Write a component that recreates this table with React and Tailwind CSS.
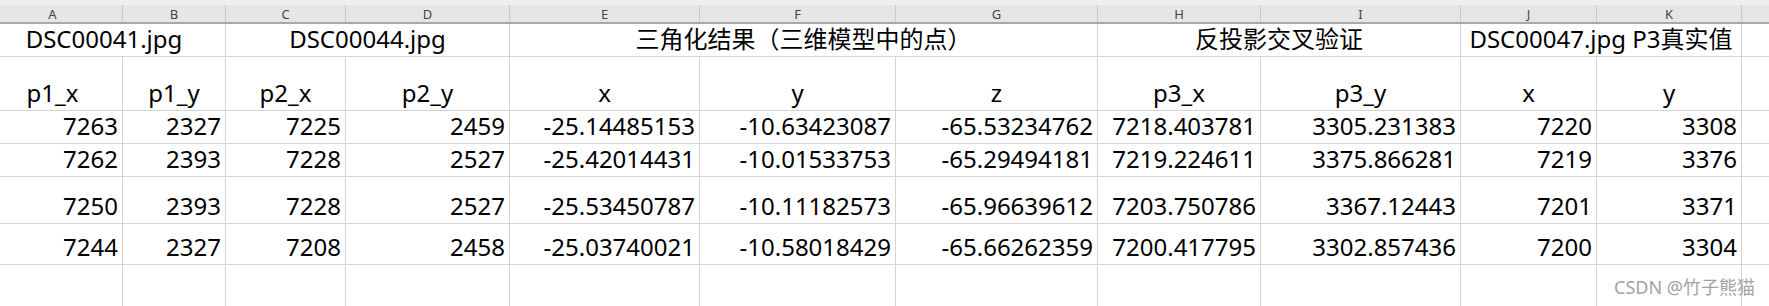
import React from 'react';

const COLS = 'grid grid-cols-[140px_103px_120px_164px_190px_196px_202px_163px_200px_136px_145px_60px]';
const FONT = { fontFamily: '"Noto Sans", "Noto Sans CJK SC", sans-serif' };

const letters = ['A', 'B', 'C', 'D', 'E', 'F', 'G', 'H', 'I', 'J', 'K', ''];

const titles = [
  { span: 'col-span-2', text: 'DSC00041.jpg' },
  { span: 'col-span-2', text: 'DSC00044.jpg' },
  { span: 'col-span-3', text: '三角化结果（三维模型中的点）' },
  { span: 'col-span-2', text: '反投影交叉验证' },
  { span: 'col-span-2', text: 'DSC00047.jpg P3真实值' },
];

const heads = ['p1_x', 'p1_y', 'p2_x', 'p2_y', 'x', 'y', 'z', 'p3_x', 'p3_y', 'x', 'y'];

const rows = [
  { h: 'h-[33px]', cells: ['7263', '2327', '7225', '2459', '-25.14485153', '-10.63423087', '-65.53234762', '7218.403781', '3305.231383', '7220', '3308'] },
  { h: 'h-[33px]', cells: ['7262', '2393', '7228', '2527', '-25.42014431', '-10.01533753', '-65.29494181', '7219.224611', '3375.866281', '7219', '3376'] },
  { h: 'h-[47px]', cells: ['7250', '2393', '7228', '2527', '-25.53450787', '-10.11182573', '-65.96639612', '7203.750786', '3367.12443', '7201', '3371'] },
  { h: 'h-[41px]', cells: ['7244', '2327', '7208', '2458', '-25.03740021', '-10.58018429', '-65.66262359', '7200.417795', '3302.857436', '7200', '3304'] },
];

const cell = 'border-r border-b border-[#d4d4d4] flex items-end pb-[5px] leading-[24px] text-[24px] text-black whitespace-nowrap overflow-visible';

export default function App() {
  return (
    <div className="relative h-[306px] w-full overflow-hidden bg-white" style={FONT}>
      <div className="h-[5px] bg-[#efefef]" />
      <div className="-ml-[17px] w-max">
        {/* column letters */}
        <div className={`${COLS} h-[19px] bg-[#e6e6e6] border-b-2 border-[#a8a8a8]`}>
          {letters.map((l, i) => (
            <div key={i} className="border-r border-[#c8c8c8] flex items-end justify-center pb-[1px] text-[13px] leading-[13px] text-[#444]">
              {l}
            </div>
          ))}
        </div>

        {/* merged titles */}
        <div className={`${COLS} h-[33px]`}>
          {titles.map((t, i) => (
            <div key={i} className={`${t.span} ${cell} justify-center`}>{t.text}</div>
          ))}
          <div className={cell} />
        </div>

        {/* sub headers */}
        <div className={`${COLS} h-[54px]`}>
          {heads.map((t, i) => (
            <div key={i} className={`${cell} justify-center`}>{t}</div>
          ))}
          <div className={cell} />
        </div>

        {rows.map((r, ri) => (
          <div key={ri} className={`${COLS} ${r.h}`}>
            {r.cells.map((v, i) => (
              <div key={i} className={`${cell} justify-end pr-[4px]`}>{v}</div>
            ))}
            <div className={cell} />
          </div>
        ))}

        <div className={`${COLS} h-[60px]`}>
          {letters.map((_, i) => (
            <div key={i} className="border-r border-[#d4d4d4]" />
          ))}
        </div>
      </div>

      <div className="absolute left-[1614px] top-[278px] text-[18px] leading-[18px] text-[#a3a3a3] whitespace-nowrap">
        CSDN @竹子熊猫
      </div>
    </div>
  );
}
